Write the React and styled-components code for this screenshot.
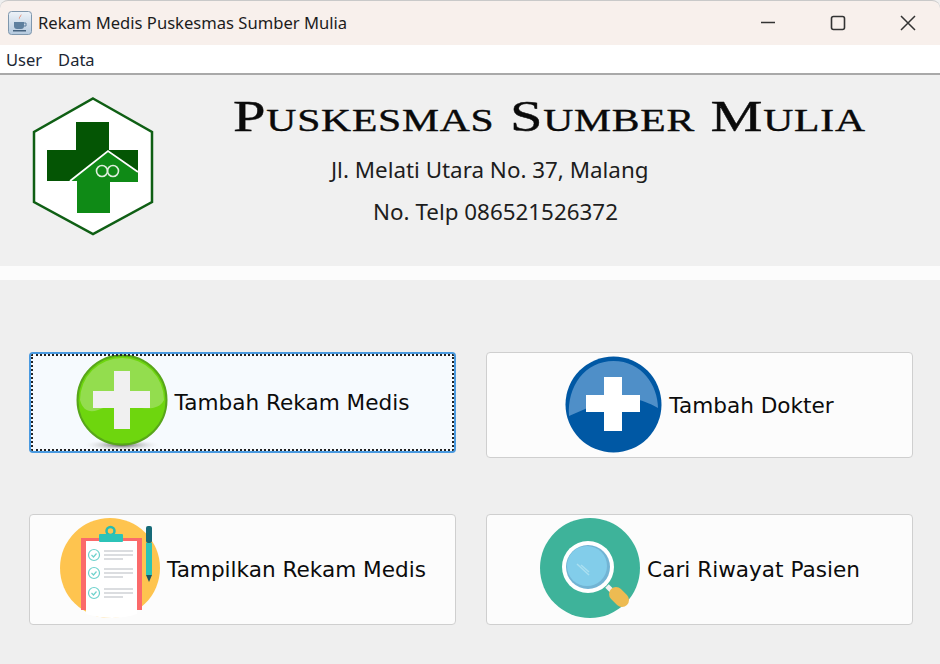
import React from 'react';
import styled, { createGlobalStyle } from 'styled-components';

const GlobalStyle = createGlobalStyle`
  html, body {
    margin: 0;
    padding: 0;
    background: #efefef;
  }
  * {
    box-sizing: border-box;
  }
`;

const Window = styled.div`
  width: 940px;
  height: 664px;
  overflow: hidden;
  background: #efefef;
  font-family: "Noto Sans", "Open Sans", sans-serif;
  color: #111;
`;

const TitleBar = styled.div`
  height: 45px;
  display: flex;
  align-items: center;
  padding: 0 24px 1px 8px;
  background: #f8f0ec;
  border-top: 1px solid #c9c9c9;
  border-radius: 8px 8px 0 0;
`;

const WindowTitle = styled.span`
  flex: 1;
  margin-left: 6px;
  font-size: 16.6px;
  color: #1c1c1c;
`;

const WindowControls = styled.div`
  display: flex;
  align-items: center;
  gap: 54px;
`;

const MenuBar = styled.nav`
  height: 30px;
  display: flex;
  align-items: center;
  gap: 16px;
  padding: 1px 6px 0;
  background: #fff;
  border-bottom: 2px solid #a9a9a9;
`;

const MenuItem = styled.span`
  font-size: 16.5px;
  color: #1c2733;
`;

const Header = styled.header`
  height: 191px;
  display: flex;
  align-items: flex-start;
  padding: 15px 0 0 20px;
  background: #f0f0f0;
`;

const LogoBox = styled.svg`
  flex: none;
  width: 150px;
  height: 150px;
`;

const HeaderText = styled.div`
  display: flex;
  flex-direction: column;
  margin-left: 63px;
`;

// the reference face is an extended copperplate, nothing installed is that wide
const ClinicName = styled.h1`
  margin: 0;
  font-family: "Liberation Serif", serif;
  font-size: 45px;
  line-height: 52px;
  font-weight: 400;
  font-variant: small-caps;
  letter-spacing: 0.6px;
  white-space: nowrap;
  color: #0a0a0a;
  -webkit-text-stroke: 0.4px #0a0a0a;
  transform: scaleX(1.3);
  transform-origin: left center;
`;

const InfoLine = styled.p`
  margin: ${props => props.$top}px 0 0 ${props => props.$indent}px;
  font-size: 22.4px;
  line-height: 30px;
  white-space: nowrap;
  color: #1d1d1d;
`;

const Band = styled.div`
  height: 14px;
  background: #fcfcfc;
`;

const ButtonGrid = styled.main`
  display: grid;
  grid-template-columns: 427px 427px;
  column-gap: 30px;
  align-items: start;
  grid-template-rows: 162px 112px;
  padding: 72px 0 0 29px;
`;

const MenuButton = styled.button`
  height: ${props => props.$height}px;
  display: flex;
  align-items: center;
  justify-content: center;
  gap: ${props => props.$gap}px;
  padding: 0;
  font-family: "DejaVu Sans", sans-serif;
  font-size: 21.6px;
  color: #0c0c0c;
  background: ${props => (props.$focused ? '#f6fafe' : '#fcfcfc')};
  border: ${props => (props.$focused ? '2px solid #4a9ae0' : '1px solid #cfcfcf')};
  border-radius: 4px;
  outline: ${props => (props.$focused ? '2px dotted #222' : 'none')};
  outline-offset: -4px;
  white-space: nowrap;
`;

const ButtonIcon = styled.svg`
  flex: none;
  margin-bottom: ${props => props.$lift || 0}px;
`;

const JavaIcon = () => (
  <svg width="24" height="24" viewBox="0 0 24 24">
    <defs>
      <linearGradient id="javaTile" x1="0" y1="0" x2="0" y2="1">
        <stop offset="0" stopColor="#eef3f8" />
        <stop offset="1" stopColor="#b4c9de" />
      </linearGradient>
    </defs>
    <rect x="0.5" y="0.5" width="23" height="23" rx="3" fill="url(#javaTile)" stroke="#7f97ad" />
    <path d="M13 3c1.5 2-2.5 3-1.5 5.500c-2-2 2-3.500 1.500-5.500z" fill="#e4572e" />
    <path d="M6 11h10v4a3 3 0 0 1-3 3H9a3 3 0 0 1-3-3z" fill="#5d7f9e" />
    <path d="M16 12h2v3h-2" fill="none" stroke="#5d7f9e" />
    <rect x="5" y="19" width="13" height="1.500" fill="#46637f" />
  </svg>
);

const MinimizeIcon = () => (
  <svg width="16" height="16" viewBox="0 0 16 16">
    <path d="M1 7.500h14" stroke="#333" strokeWidth="1.500" />
  </svg>
);

const MaximizeIcon = () => (
  <svg width="16" height="16" viewBox="0 0 16 16">
    <rect x="1.500" y="1.500" width="13" height="13" rx="2" fill="none" stroke="#333" strokeWidth="1.600" />
  </svg>
);

const CloseIcon = () => (
  <svg width="16" height="16" viewBox="0 0 16 16">
    <path d="M1 1l14 14M15 1L1 15" stroke="#333" strokeWidth="1.500" />
  </svg>
);

const Logo = () => (
  <LogoBox viewBox="0 0 150 150">
    <path d="M73 8.500L132 42v70l-59 32-59-32V42z" fill="#fff" stroke="#0f5f14" strokeWidth="2.500" />
    <path d="M56 32h33v28h29v31H27V60h29z" fill="#045504" />
    <path d="M88 62l30 21v9H90v31H57V91h-7z" fill="#0f8a16" />
    <path d="M50 91l38-30 30 21" fill="none" stroke="#fff" strokeWidth="1.800" />
    <circle cx="82" cy="81" r="5.500" fill="none" stroke="#dfeede" strokeWidth="1.600" />
    <circle cx="93" cy="81" r="5.500" fill="none" stroke="#dfeede" strokeWidth="1.600" />
  </LogoBox>
);

const GreenPlus = () => (
  <ButtonIcon width="92" height="98" viewBox="0 0 92 98">
    <defs>
      <radialGradient id="greenShadow">
        <stop offset="0" stopColor="#555" />
        <stop offset="1" stopColor="#fff" stopOpacity="0" />
      </radialGradient>
    </defs>
    <ellipse cx="46" cy="91" rx="40" ry="6" fill="url(#greenShadow)" />
    <circle cx="46" cy="46" r="44.500" fill="#6ed60e" stroke="#58a61a" strokeWidth="2" />
    <path d="M4 46a42 42 0 0 1 84 0c-4 8-12 9-22 8-16-2-30-4-44 2-8 3-15 1-18-10z" fill="#93dd4e" />
    <path d="M38 17h16v20h20v17H54v21H38V54H17V37h21z" fill="#f0f0f0" />
  </ButtonIcon>
);

const BluePlus = () => (
  <ButtonIcon $lift={2} width="97" height="97" viewBox="0 0 97 97">
    <circle cx="48.500" cy="48.500" r="48" fill="#0058a4" />
    <path d="M4 60C2 30 20 5 48.500 5S93 30 93 52c-6-3-12-7-24-9-24-3-44 8-65 17z" fill="#4f8fc8" />
    <path d="M39 21h18v18h18v17H57v19H39V56H21V39h18z" fill="#fff" />
  </ButtonIcon>
);

const CheckRow = ({ y }) => (
  <g>
    <circle cx="43" cy={y} r="5.500" fill="#fff" stroke="#6fd2cd" strokeWidth="1.200" />
    <path d={`M40.500 ${y}l2 2 3-3.500`} fill="none" stroke="#6fd2cd" strokeWidth="1.200" />
    <path d={`M53 ${y - 4}h29M53 ${y}h29M53 ${y + 4}h19`} stroke="#cfd2d6" strokeWidth="1.500" />
  </g>
);

const ClipboardIcon = () => (
  <ButtonIcon $lift={3} width="103" height="102" viewBox="8 7 103 102">
    <circle cx="59" cy="58" r="50" fill="#fec44f" />
    <rect x="30" y="28" width="61" height="72" fill="#fb6a6a" />
    <path d="M35 31h51v73q-25 8-51 0z" fill="#fff" />
    <circle cx="59.500" cy="21" r="4" fill="none" stroke="#27bdb2" strokeWidth="2.500" />
    <rect x="48" y="24" width="24" height="8" rx="1" fill="#2cc3b8" />
    <rect x="95" y="16" width="6" height="17" rx="2" fill="#166a78" />
    <rect x="95" y="33" width="6" height="32" fill="#2cc3b8" />
    <path d="M95 65h6l-3 7z" fill="#1c5560" />
    <CheckRow y={45} />
    <CheckRow y={63} />
    <CheckRow y={83} />
  </ButtonIcon>
);

const SearchIcon = () => (
  <ButtonIcon $lift={3} width="102" height="102" viewBox="8 7 102 102">
    <circle cx="59" cy="58" r="50" fill="#3eb39a" />
    <path d="M76 76l9 9" stroke="#f1f1f1" strokeWidth="5" />
    <path d="M85 84l6 6" stroke="#edbb52" strokeWidth="14" strokeLinecap="round" />
    <circle cx="57" cy="57" r="26" fill="#fff" />
    <circle cx="57" cy="57" r="22" fill="#72b4d4" />
    <circle cx="56" cy="56" r="20" fill="#82cdea" />
    <path d="M46 54l12 11M50 55l8 7" stroke="#a9dff0" strokeWidth="1.500" />
  </ButtonIcon>
);

export default function App() {
  return (
    <Window>
      <GlobalStyle />
      <TitleBar>
        <JavaIcon />
        <WindowTitle>Rekam Medis Puskesmas Sumber Mulia</WindowTitle>
        <WindowControls>
          <MinimizeIcon />
          <MaximizeIcon />
          <CloseIcon />
        </WindowControls>
      </TitleBar>
      <MenuBar>
        <MenuItem>User</MenuItem>
        <MenuItem>Data</MenuItem>
      </MenuBar>
      <Header>
        <Logo />
        <HeaderText>
          <ClinicName>Puskesmas Sumber Mulia</ClinicName>
          <InfoLine $top={13} $indent={98}>Jl. Melati Utara No. 37, Malang</InfoLine>
          <InfoLine $top={12} $indent={140}>No. Telp 086521526372</InfoLine>
        </HeaderText>
      </Header>
      <Band />
      <ButtonGrid>
        <MenuButton $focused $height={101} $gap={7}>
          <GreenPlus />
          Tambah Rekam Medis
        </MenuButton>
        <MenuButton $height={106} $gap={7}>
          <BluePlus />
          Tambah Dokter
        </MenuButton>
        <MenuButton $height={111} $gap={5}>
          <ClipboardIcon />
          Tampilkan Rekam Medis
        </MenuButton>
        <MenuButton $height={111} $gap={6}>
          <SearchIcon />
          Cari Riwayat Pasien
        </MenuButton>
      </ButtonGrid>
    </Window>
  );
}
